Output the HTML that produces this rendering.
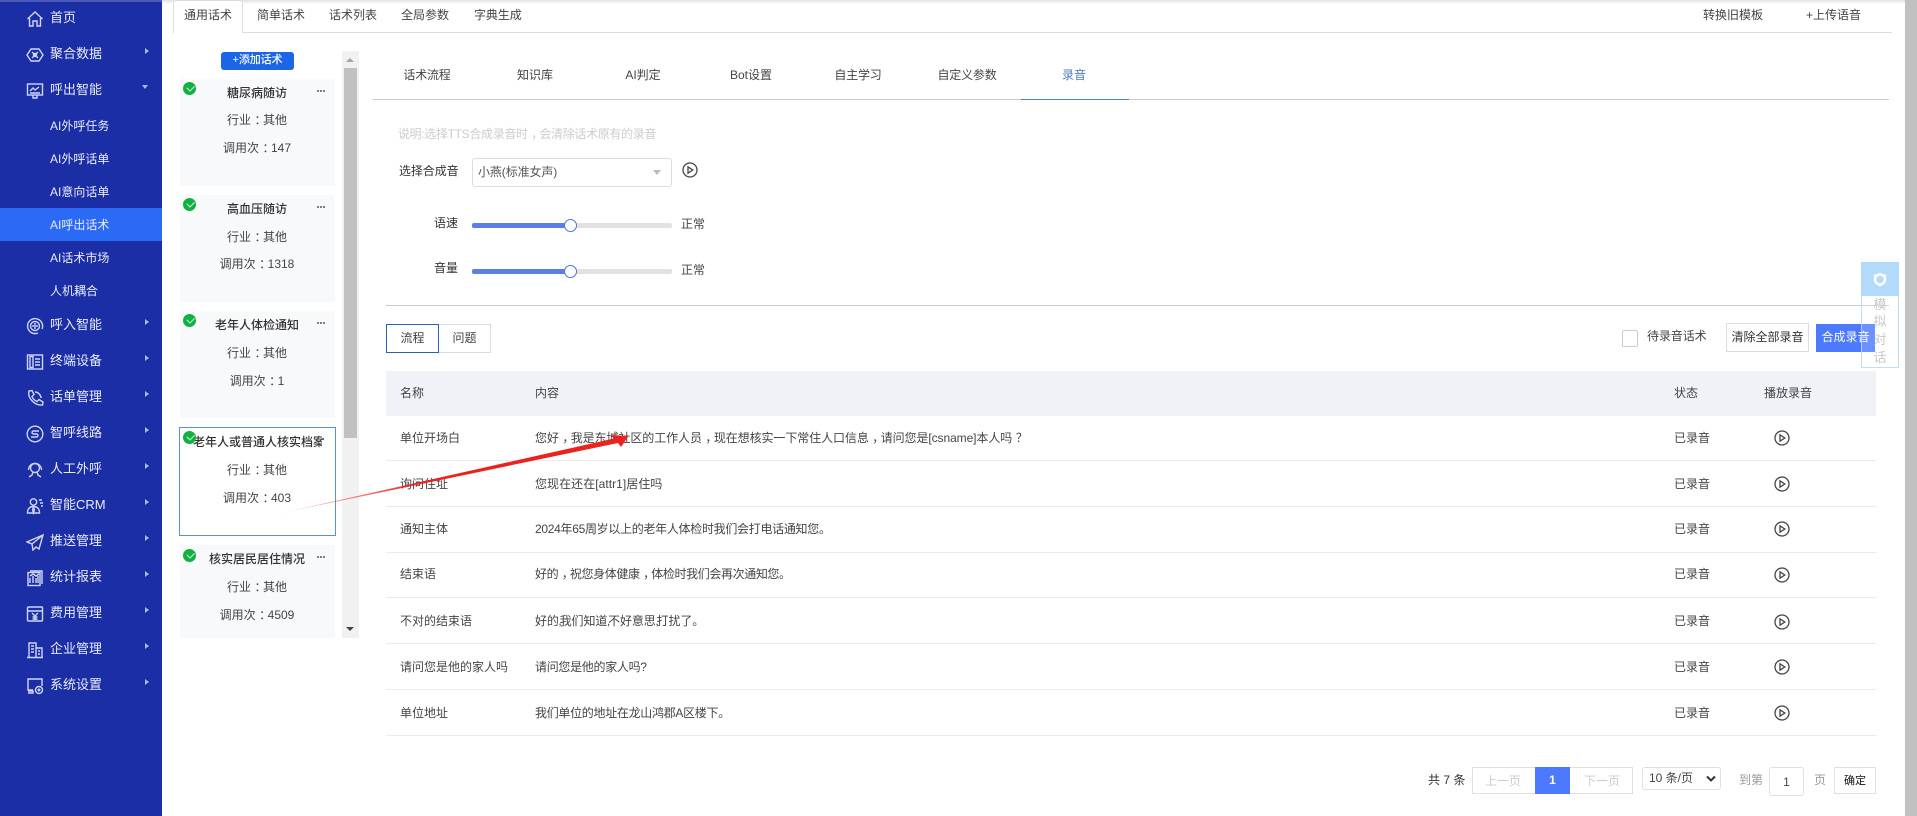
<!DOCTYPE html>
<html lang="zh"><head><meta charset="utf-8"><title>AI呼出话术</title>
<style>
*{box-sizing:border-box}
html,body{margin:0;padding:0;width:1917px;height:816px;overflow:hidden;background:#fff}
body{position:relative;font-family:"Liberation Sans","Noto Sans CJK SC",sans-serif;font-size:12px;color:#444}
.a{position:absolute}
.t{position:absolute;line-height:20px;height:20px;white-space:nowrap}
.c{transform:translateX(-50%)}
.p{display:inline-block;transform:translateX(3.5px)}
.nc{margin:0 -2px 0 -.4px}
#side{position:absolute;left:0;top:0;width:162px;height:816px;background:#1b2ea5}
#side .m{position:absolute;left:50px;height:20px;line-height:20px;color:#e9ecfa;font-size:13px;white-space:nowrap}
#side .s{font-size:12px}
#side svg.i{position:absolute;left:26px;width:18px;height:18px;fill:none;stroke:#cfd6f4;stroke-width:1.4}
.tri{position:absolute;left:145px;width:0;height:0;border-left:4px solid #aeb7e2;border-top:3.5px solid transparent;border-bottom:3.5px solid transparent}
.card{position:absolute;left:180px;width:155px;background:#f8f9fb;text-align:center;overflow:hidden}
.ck{position:absolute;left:183px;width:13px;height:13px;border-radius:50%;background:#12b03f}
.ck:after{content:"";position:absolute;left:3.5px;top:3px;width:6px;height:3.5px;border-left:1.3px solid #cfe;border-bottom:1.3px solid #cfe;transform:rotate(-45deg)}
.ti{font-weight:500;color:#333}
.dots{position:absolute;left:317px;width:8px;height:2px;background:radial-gradient(circle at 1px 1px,#555 .9px,transparent 1px) 0 0/3px 2px repeat-x}
.ln{position:absolute;height:1px;background:#e9ebef}
.st{position:absolute;left:1674px;line-height:20px;height:20px;color:#444}
.pl{position:absolute;width:16px;height:16px;left:1774px}
</style></head><body>
<div class="a" style="left:162px;top:0;width:1743px;height:4px;background:linear-gradient(#e2e2e2,#fff)"></div>

<div id="side">
<div class="a" style="left:0;top:0;width:162px;height:2px;background:#4b5ab8"></div>
<div class="a" style="left:0;top:208px;width:162px;height:33px;background:#2b6af5"></div>
<svg class="i" style="top:10px" viewBox="0 0 18 18"><path d="M1.500 9 9 2l7.500 7M3.500 8v8h3.500v-5h4v5h3.500V8"/></svg>
<svg class="i" style="top:46px" viewBox="0 0 18 18"><path d="M5 3h8l4 6-4 6H5L1 9z"/><path d="M6 6l6 6M12 6l-6 6"/><circle cx="9" cy="9" r="1.500"/></svg>
<svg class="i" style="top:82px" viewBox="0 0 18 18"><rect x="1.500" y="2" width="15" height="11"/><path d="M4 9l3-3 2 2 4-3M4 11h10M7 13v3h4v-3"/></svg>
<svg class="i" style="top:317px" viewBox="0 0 18 18"><path d="M16 12A7.500 7.500 0 1 0 12 16"/><circle cx="9" cy="9" r="4.500"/><path d="M9 6v6M7 8v2M11 8v2"/></svg>
<svg class="i" style="top:353px" viewBox="0 0 18 18"><rect x="1.500" y="2" width="15" height="14"/><rect x="4" y="3.500" width="3" height="11"/><path d="M9 6h5M9 9h5M9 12h5"/></svg>
<svg class="i" style="top:389px" viewBox="0 0 18 18"><path d="M3 2 6 1.500 8 5.500 6 7.500C7 10 8.500 11.500 11 12.500l2-2 4 2.500-.500 3C9 17 1 9 3 2z"/><path d="M9 3c3 0 6 3 6 6"/></svg>
<svg class="i" style="top:425px" viewBox="0 0 18 18"><circle cx="9" cy="9" r="7.800"/><path d="M13 6H7.500a1.500 1.500 0 0 0 0 3h3a1.500 1.500 0 0 1 0 3H5"/></svg>
<svg class="i" style="top:461px" viewBox="0 0 18 18"><circle cx="9" cy="7" r="4.500"/><path d="M2.500 9a6.500 6.500 0 0 1 13 0M7 11l-1 3-3 2M11 11l1 3 3 2"/></svg>
<svg class="i" style="top:497px" viewBox="0 0 18 18"><circle cx="7.500" cy="5" r="3.200"/><path d="M1.500 16c0-4 2-6.500 6-6.500s6 2.500 6 6.500zM7.500 10l-1 3 1 3 1-3zM13 3h3M14 6h3M15 9h2"/></svg>
<svg class="i" style="top:533px" viewBox="0 0 18 18"><path d="M17 2 1 9l5 2 1 6 3-3 3 2zM17 2 6 11"/></svg>
<svg class="i" style="top:569px" viewBox="0 0 18 18"><rect x="2" y="3.500" width="12" height="13"/><path d="M4 2h12v13M4 14V9M7 14V7M10 14V9M12 14V7M4 7l3-2 3 2 3-2"/></svg>
<svg class="i" style="top:605px" viewBox="0 0 18 18"><rect x="1.500" y="2" width="15" height="14" rx="1"/><path d="M1.500 6h15M6 8l3 3 3-3M9 11v4M6.500 12h5M6.500 14h5"/></svg>
<svg class="i" style="top:641px" viewBox="0 0 18 18"><path d="M3 16V2h7v14M10 7h6v9M1 16.500h16M5 5h3M5 8h3M5 11h3M12 10h2M12 13h2"/></svg>
<svg class="i" style="top:677px" viewBox="0 0 18 18"><path d="M7 13H2V2h14v7M2 16h5v-2H2"/><circle cx="13" cy="13" r="3.500"/><circle cx="13" cy="13" r=".8"/></svg>

<div class="m" style="top:8px">首页</div>
<div class="m" style="top:44px">聚合数据</div>
<div class="m" style="top:80px">呼出智能</div>
<div class="m s" style="top:116px">AI外呼任务</div>
<div class="m s" style="top:149px">AI外呼话单</div>
<div class="m s" style="top:182px">AI意向话单</div>
<div class="m s" style="top:215px">AI呼出话术</div>
<div class="m s" style="top:248px">AI话术市场</div>
<div class="m s" style="top:281px">人机耦合</div>
<div class="m" style="top:315px">呼入智能</div>
<div class="m" style="top:351px">终端设备</div>
<div class="m" style="top:387px">话单管理</div>
<div class="m" style="top:423px">智呼线路</div>
<div class="m" style="top:459px">人工外呼</div>
<div class="m" style="top:495px">智能CRM</div>
<div class="m" style="top:531px">推送管理</div>
<div class="m" style="top:567px">统计报表</div>
<div class="m" style="top:603px">费用管理</div>
<div class="m" style="top:639px">企业管理</div>
<div class="m" style="top:675px">系统设置</div>

<i class="tri" style="top:48px"></i>
<i class="a" style="left:142px;top:85px;width:0;height:0;border-top:4px solid #aeb7e2;border-left:3.500px solid transparent;border-right:3.500px solid transparent"></i>
<i class="tri" style="top:319px"></i><i class="tri" style="top:355px"></i><i class="tri" style="top:391px"></i><i class="tri" style="top:427px"></i><i class="tri" style="top:463px"></i><i class="tri" style="top:499px"></i><i class="tri" style="top:535px"></i><i class="tri" style="top:571px"></i><i class="tri" style="top:607px"></i><i class="tri" style="top:643px"></i><i class="tri" style="top:679px"></i>
</div>

<!-- top tabs -->
<div class="a" style="left:173px;top:32px;width:1719px;height:1px;background:#ddd"></div>
<div class="a" style="left:173px;top:0;width:70px;height:33px;background:#fff;border:1px solid #ddd;border-bottom:0;border-radius:3px 3px 0 0"></div>
<div class="t" style="left:184px;top:5px">通用话术</div>
<div class="t" style="left:257px;top:5px">简单话术</div>
<div class="t" style="left:329px;top:5px">话术列表</div>
<div class="t" style="left:401px;top:5px">全局参数</div>
<div class="t" style="left:474px;top:5px;letter-spacing:-.1px">字典生成</div>
<div class="t" style="left:1703px;top:5px">转换旧模板</div>
<div class="t" style="left:1806px;top:5px">+上传语音</div>

<!-- list -->
<div class="a" style="left:221px;top:52px;width:73px;height:18px;background:#1a66e6;border-radius:3px;color:#fff;text-align:center;line-height:17px;font-size:11px;font-weight:500;letter-spacing:-.1px">+添加话术</div>

<div class="card" style="top:79px;height:107px"></div>
<div class="card" style="top:195px;height:107px"></div>
<div class="card" style="top:311px;height:107px"></div>
<div class="a" style="left:179px;top:427px;width:157px;height:109px;background:#fff;border:1px solid #5b92c8"></div>
<div class="card" style="top:545px;height:93px"></div>

<div class="t c ti" style="left:257px;top:83px">糖尿病随访</div><div class="t c" style="left:257px;top:110px">行业<span class="p">：</span>其他</div><div class="t c" style="left:257px;top:138px">调用次<span class="p">：</span>147</div>
<div class="t c ti" style="left:257px;top:199px">高血压随访</div><div class="t c" style="left:257px;top:227px">行业<span class="p">：</span>其他</div><div class="t c" style="left:257px;top:254px">调用次<span class="p">：</span>1318</div>
<div class="t c ti" style="left:257px;top:315px">老年人体检通知</div><div class="t c" style="left:257px;top:343px">行业<span class="p">：</span>其他</div><div class="t c" style="left:257px;top:371px">调用次<span class="p">：</span>1</div>
<div class="a ti" style="left:193px;top:432px;width:129px;height:20px;line-height:20px;overflow:hidden;white-space:nowrap">老年人或普通人核实档案</div><div class="t c" style="left:257px;top:460px">行业<span class="p">：</span>其他</div><div class="t c" style="left:257px;top:488px">调用次<span class="p">：</span>403</div>
<div class="t c ti" style="left:257px;top:549px">核实居民居住情况</div><div class="t c" style="left:257px;top:577px">行业<span class="p">：</span>其他</div><div class="t c" style="left:257px;top:605px">调用次<span class="p">：</span>4509</div>

<i class="ck" style="top:82px"></i><i class="ck" style="top:198px"></i><i class="ck" style="top:314px"></i><i class="ck" style="top:431px"></i><i class="ck" style="top:549px"></i>
<div class="dots" style="top:90px"></div><div class="dots" style="top:206px"></div><div class="dots" style="top:322px"></div><div class="dots" style="top:556px"></div>
<div class="a" style="left:322px;top:438px;width:2px;height:2px;background:#666"></div>

<div class="a" style="left:342px;top:51px;width:17px;height:587px;background:#f1f1f1"></div>
<div class="a" style="left:344px;top:68px;width:13px;height:370px;background:#c1c1c1"></div>
<i class="a" style="left:346px;top:58px;border-bottom:4px solid #a3a3a3;border-left:4px solid transparent;border-right:4px solid transparent"></i>
<i class="a" style="left:346px;top:627px;border-top:4px solid #444;border-left:4px solid transparent;border-right:4px solid transparent"></i>

<!-- sub tabs -->
<div class="a" style="left:373px;top:99px;width:1516px;height:1px;background:#ccc"></div>
<div class="a" style="left:1021px;top:99px;width:108px;height:1px;background:#4a7fc4"></div>
<div class="t c" style="left:427px;top:65px;letter-spacing:-.2px">话术流程</div>
<div class="t c" style="left:535px;top:65px">知识库</div>
<div class="t c" style="left:643px;top:65px">AI判定</div>
<div class="t c" style="left:751px;top:65px">Bot设置</div>
<div class="t c" style="left:858px;top:65px;letter-spacing:-.2px">自主学习</div>
<div class="t c" style="left:967px;top:65px;letter-spacing:-.2px">自定义参数</div>
<div class="t c" style="left:1074px;top:65px;color:#4a7fc4">录音</div>

<div class="t" style="left:398px;top:124px;color:#ccc;letter-spacing:-.33px">说明:选择TTS合成录音时<span class="p">，</span>会清除话术原有的录音</div>
<div class="t" style="left:399px;top:161px;color:#333;letter-spacing:-.1px">选择合成音</div>
<div class="a" style="left:472px;top:158px;width:200px;height:29px;border:1px solid #ddd;border-radius:3px"></div>
<div class="t" style="left:478px;top:162px;color:#555;letter-spacing:-.1px">小燕(标准女声)</div>
<i class="a" style="left:653px;top:170px;border-top:5px solid #bbb;border-left:4.500px solid transparent;border-right:4.500px solid transparent"></i>
<svg class="a" style="left:682px;top:162px;width:16px;height:16px" viewBox="0 0 16 16" fill="none" stroke="#444" stroke-width="1.300"><circle cx="8" cy="8" r="7"/><path d="M6 4.800v6.400L10.800 8z"/></svg>

<div class="t" style="left:434px;top:213px;color:#333">语速</div>
<div class="a" style="left:472px;top:223px;width:200px;height:5px;background:#e1e1e1;border-radius:2px"></div>
<div class="a" style="left:472px;top:223px;width:98px;height:5px;background:#5a7fe6;border-radius:2px"></div>
<div class="a" style="left:564px;top:219px;width:13px;height:13px;background:#fff;border:1px solid #4a78d8;border-radius:50%"></div>
<div class="t" style="left:681px;top:214px">正常</div>

<div class="t" style="left:434px;top:258px;color:#333">音量</div>
<div class="a" style="left:472px;top:269px;width:200px;height:5px;background:#e1e1e1;border-radius:2px"></div>
<div class="a" style="left:472px;top:269px;width:98px;height:5px;background:#5a7fe6;border-radius:2px"></div>
<div class="a" style="left:564px;top:265px;width:13px;height:13px;background:#fff;border:1px solid #4a78d8;border-radius:50%"></div>
<div class="t" style="left:681px;top:260px">正常</div>

<div class="a" style="left:386px;top:305px;width:1503px;height:1px;background:#ccc"></div>

<div class="a" style="left:438px;top:324px;width:53px;height:29px;border:1px solid #ddd;text-align:center;line-height:27px">问题</div>
<div class="a" style="left:386px;top:324px;width:53px;height:29px;border:1px solid #2f5fb5;text-align:center;line-height:27px;background:#fff">流程</div>

<div class="a" style="left:1622px;top:330px;width:16px;height:17px;border:1px solid #ccc;border-radius:2px"></div>
<div class="t" style="left:1647px;top:326px;letter-spacing:-.1px">待录音话术</div>
<div class="a" style="left:1726px;top:323px;width:83px;height:29px;border:1px solid #ddd;text-align:center;line-height:27px;color:#333">清除全部录音</div>
<div class="a" style="left:1816px;top:324px;width:59px;height:28px;background:#4d79ff;color:#fff;text-align:center;line-height:27px">合成录音</div>

<!-- table -->
<div class="a" style="left:386px;top:371px;width:1490px;height:45px;background:#f0f2f7"></div>
<div class="t" style="left:400px;top:383px">名称</div>
<div class="t" style="left:535px;top:383px">内容</div>
<div class="t" style="left:1674px;top:383px">状态</div>
<div class="t" style="left:1764px;top:383px">播放录音</div>

<div class="ln" style="left:386px;top:460px;width:1490px"></div>
<div class="ln" style="left:386px;top:506px;width:1490px"></div>
<div class="ln" style="left:386px;top:552px;width:1490px"></div>
<div class="ln" style="left:386px;top:597px;width:1490px"></div>
<div class="ln" style="left:386px;top:643px;width:1490px"></div>
<div class="ln" style="left:386px;top:689px;width:1490px"></div>
<div class="ln" style="left:386px;top:735px;width:1490px"></div>

<div class="t" style="left:400px;top:428px">单位开场白</div><div class="t" style="left:535px;top:428px;letter-spacing:-.08px">您好<span class="p">，</span>我是东城社区的工作人员<span class="p">，</span>现在想核实一下常住人口信息<span class="p">，</span>请问您是[csname]本人吗<span class="p">？</span></div>
<div class="t" style="left:400px;top:474px">询问住址</div><div class="t" style="left:535px;top:474px;letter-spacing:.05px">您现在还在[attr1]居住吗</div>
<div class="t" style="left:400px;top:519px">通知主体</div><div class="t" style="left:535px;top:519px;letter-spacing:-.3px">2024年65周岁以上的老年人体检时我们会打电话通知您。</div>
<div class="t" style="left:400px;top:564px">结束语</div><div class="t" style="left:535px;top:564px;letter-spacing:-.38px">好的<span class="p">，</span>祝您身体健康<span class="p">，</span>体检时我们会再次通知您。</div>
<div class="t" style="left:400px;top:611px">不对的结束语</div><div class="t" style="left:535px;top:611px;letter-spacing:-.1px">好的<span class="nc">,</span>我们知道<span class="nc">,</span>不好意思<span class="nc">,</span>打扰了。</div>
<div class="t" style="left:400px;top:657px">请问您是他的家人吗</div><div class="t" style="left:535px;top:657px;letter-spacing:-.3px">请问您是他的家人吗?</div>
<div class="t" style="left:400px;top:703px">单位地址</div><div class="t" style="left:535px;top:703px;letter-spacing:-.3px">我们单位的地址在龙山鸿郡A区楼下。</div>

<div class="st" style="top:428px">已录音</div><div class="st" style="top:474px">已录音</div><div class="st" style="top:519px">已录音</div><div class="st" style="top:564px">已录音</div><div class="st" style="top:611px">已录音</div><div class="st" style="top:657px">已录音</div><div class="st" style="top:703px">已录音</div>

<svg width="0" height="0" style="position:absolute"><defs><g id="pb" fill="none" stroke="#444" stroke-width="1.300"><circle cx="8" cy="8" r="7"/><path d="M6 4.800v6.400L10.800 8z"/></g></defs></svg>
<svg class="pl" style="top:430px" viewBox="0 0 16 16"><use href="#pb"/></svg>
<svg class="pl" style="top:476px" viewBox="0 0 16 16"><use href="#pb"/></svg>
<svg class="pl" style="top:521px" viewBox="0 0 16 16"><use href="#pb"/></svg>
<svg class="pl" style="top:567px" viewBox="0 0 16 16"><use href="#pb"/></svg>
<svg class="pl" style="top:614px" viewBox="0 0 16 16"><use href="#pb"/></svg>
<svg class="pl" style="top:659px" viewBox="0 0 16 16"><use href="#pb"/></svg>
<svg class="pl" style="top:705px" viewBox="0 0 16 16"><use href="#pb"/></svg>

<!-- pagination -->
<div class="t" style="left:1428px;top:770px;color:#333">共 7 条</div>
<div class="a" style="left:1472px;top:767px;width:161px;height:27px;border:1px solid #e0e0e0"></div>
<div class="a" style="left:1535px;top:767px;width:35px;height:27px;background:#4d79ff;color:#fff;text-align:center;line-height:27px;font-weight:700">1</div>
<div class="t c" style="left:1503px;top:771px;color:#ccc">上一页</div>
<div class="t c" style="left:1602px;top:771px;color:#ccc">下一页</div>
<div class="a" style="left:1642px;top:767px;width:79px;height:23px;border:1px solid #e0e0e0;border-radius:3px;padding-left:6px;line-height:20px;color:#444">10 条/页</div>
<svg class="a" style="left:1706px;top:775px;width:10px;height:8px" viewBox="0 0 10 8" fill="none" stroke="#333" stroke-width="2"><path d="M1 1.500l4 4 4-4"/></svg>
<div class="t" style="left:1739px;top:770px;color:#999">到第</div>
<div class="a" style="left:1769px;top:767px;width:35px;height:29px;border:1px solid #e0e0e0;border-radius:3px;text-align:center;line-height:29px">1</div>
<div class="t" style="left:1814px;top:770px;color:#999">页</div>
<div class="a" style="left:1834px;top:767px;width:42px;height:27px;border:1px solid #e0e0e0;text-align:center;line-height:26px;font-size:11px;color:#111">确定</div>

<!-- arrow -->
<svg class="a" style="left:0;top:0;width:1917px;height:816px;pointer-events:none" viewBox="0 0 1917 816">
<defs><linearGradient id="ag" x1="277" y1="514" x2="420" y2="482" gradientUnits="userSpaceOnUse"><stop offset="0" stop-color="#ee2a26" stop-opacity=".1"/><stop offset="1" stop-color="#ea2320"/></linearGradient></defs>
<polygon points="277,514 614,438.500 611,435 628.500,436 621,447 618,443" fill="url(#ag)"/>
</svg>

<!-- float widget -->
<div class="a" style="left:1861px;top:262px;width:38px;height:106px;border:1px solid rgba(179,217,251,.85);background:rgba(255,255,255,.18)"></div>
<div class="a" style="left:1861px;top:262px;width:38px;height:34px;background:#b3d9fb"></div>
<svg class="a" style="left:1872px;top:271px;width:16px;height:16px" viewBox="0 0 16 16" fill="none"><circle cx="8" cy="8.500" r="5" stroke="#fff" stroke-width="2.400"/><circle cx="3" cy="4.500" r="1.300" fill="#fff"/><circle cx="13" cy="4.500" r="1.300" fill="#fff"/><circle cx="8" cy="14" r="1.500" fill="#fff"/></svg>
<div class="t c" style="left:1880px;top:295px;color:#c8c8c8;font-size:13px">模</div>
<div class="t c" style="left:1880px;top:312px;color:#c8c8c8;font-size:13px">拟</div>
<div class="t c" style="left:1880px;top:330px;color:#c8c8c8;font-size:13px">对</div>
<div class="t c" style="left:1880px;top:348px;color:#c8c8c8;font-size:13px">话</div>

<!-- page scrollbar -->
<div class="a" style="left:1905px;top:0;width:12px;height:816px;background:#c1c1c1"></div>
</body></html>
